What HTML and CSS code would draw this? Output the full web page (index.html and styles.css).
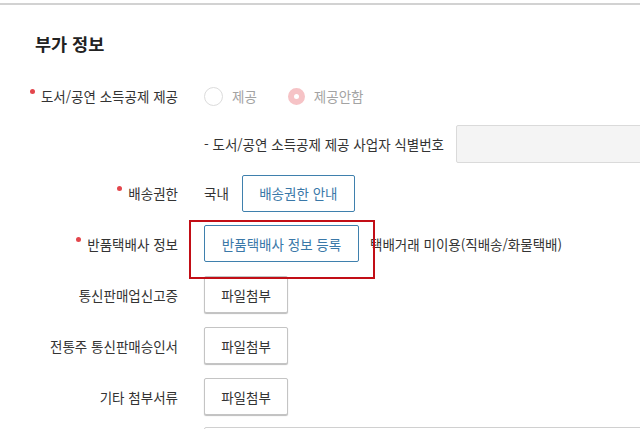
FILE: index.html
```html
<!DOCTYPE html>
<html lang="ko">
<head>
  <meta charset="UTF-8" />
  <meta name="viewport" content="width=device-width, initial-scale=1.0"/>
  <title>부가 정보</title>
  <link rel="stylesheet" href="styles.css">
</head>
<body>
  <div class="page">
    <h2 class="title">부가 정보</h2>

    <div class="row short">
      <div class="label required">도서/공연 소득공제 제공</div>
      <div class="field">
        <label class="radio"><span class="circle"></span>제공</label>
        <label class="radio checked"><span class="circle"></span>제공안함</label>
      </div>
    </div>

    <div class="row short">
      <div class="label"></div>
      <div class="field">
        <span class="sub">- 도서/공연 소득공제 제공 사업자 식별번호</span>
        <div class="text-box"></div>
      </div>
    </div>

    <div class="row mid">
      <div class="label required">배송권한</div>
      <div class="field">
        <span class="plain">국내</span>
        <button class="btn blue">배송권한 안내</button>
      </div>
    </div>

    <div class="row">
      <div class="label required">반품택배사 정보</div>
      <div class="field">
        <div class="mark">
          <button class="btn blue wide">반품택배사 정보 등록</button>
          <span class="highlight"></span>
        </div>
        <span class="note">택배거래 미이용(직배송/화물택배)</span>
      </div>
    </div>

    <div class="row">
      <div class="label">통신판매업신고증</div>
      <div class="field"><button class="btn file">파일첨부</button></div>
    </div>

    <div class="row">
      <div class="label">전통주 통신판매승인서</div>
      <div class="field"><button class="btn file">파일첨부</button></div>
    </div>

    <div class="row">
      <div class="label">기타 첨부서류</div>
      <div class="field"><button class="btn file">파일첨부</button></div>
    </div>

    <div class="row last">
      <div class="label"></div>
      <div class="field"><div class="next-box"></div></div>
    </div>
  </div>
</body>
</html>
```

FILE: styles.css
```css
body {
  margin: 0;
  font-family: 'Noto Sans CJK KR', 'Noto Sans', sans-serif;
  font-size: 13.5px;
  color: #333;
  background: #fff;
  overflow: hidden;
}
.page {
  margin-top: 3px;
  border-top: 2px solid #d2d2d2;
  height: 424px;
  overflow: hidden;
}
.title {
  margin: 0;
  padding: 27px 0 0 35px;
  height: 40px;
  font-size: 17.5px;
  font-weight: bold;
  line-height: 24px;
  color: #222;
}
.row {
  display: grid;
  grid-template-columns: 178px 1fr;
  column-gap: 26px;
  align-items: center;
  height: 51px;
}
.row.short {
  height: 48px;
}
.row.mid {
  height: 50px;
}
.label {
  text-align: right;
  white-space: nowrap;
}
.label.required::before {
  content: "";
  display: inline-block;
  width: 5px;
  height: 5px;
  border-radius: 50%;
  background: #e3464c;
  margin-right: 6px;
  vertical-align: 8px;
}
.field {
  display: flex;
  align-items: center;
  white-space: nowrap;
}
.radio {
  display: flex;
  align-items: center;
  color: #a3a3a3;
  margin-right: 31px;
}
.radio .circle {
  width: 17px;
  height: 17px;
  border: 1px solid #dcdcdc;
  border-radius: 50%;
  margin-right: 9px;
  box-sizing: content-box;
}
.radio.checked .circle {
  width: 5px;
  height: 5px;
  border: 6px solid #f6c3c6;
  background: #fff;
}
.sub {
  margin-right: 12px;
}
.text-box {
  flex: none;
  width: 260px;
  height: 36px;
  border: 1px solid #dadada;
  background: #f4f4f4;
  border-radius: 2px;
}
.plain {
  margin-right: 13px;
}
.btn {
  font-family: inherit;
  font-size: 13.5px;
  height: 37px;
  padding: 0;
  border-radius: 2px;
  background: #fff;
  cursor: pointer;
}
.btn.blue {
  width: 113px;
  border: 1px solid #3f80ad;
  color: #3a78a8;
}
.btn.blue.wide {
  width: 155px;
}
.btn.file {
  width: 84px;
  border: 1px solid #c4c4c4;
  box-shadow: 0 1px 1px #bdbdbd;
  color: #333;
}
.mark {
  position: relative;
  display: flex;
}
.highlight {
  position: absolute;
  left: -15px;
  top: -5px;
  width: 182px;
  height: 55px;
  border: 2px solid #c20e16;
  pointer-events: none;
}
.note {
  margin-left: 11px;
}
.row.last {
  align-items: start;
}
.next-box {
  margin-top: 5px;
  width: 440px;
  height: 30px;
  border: 1px solid #d0d0d0;
  border-radius: 2px;
}
```
